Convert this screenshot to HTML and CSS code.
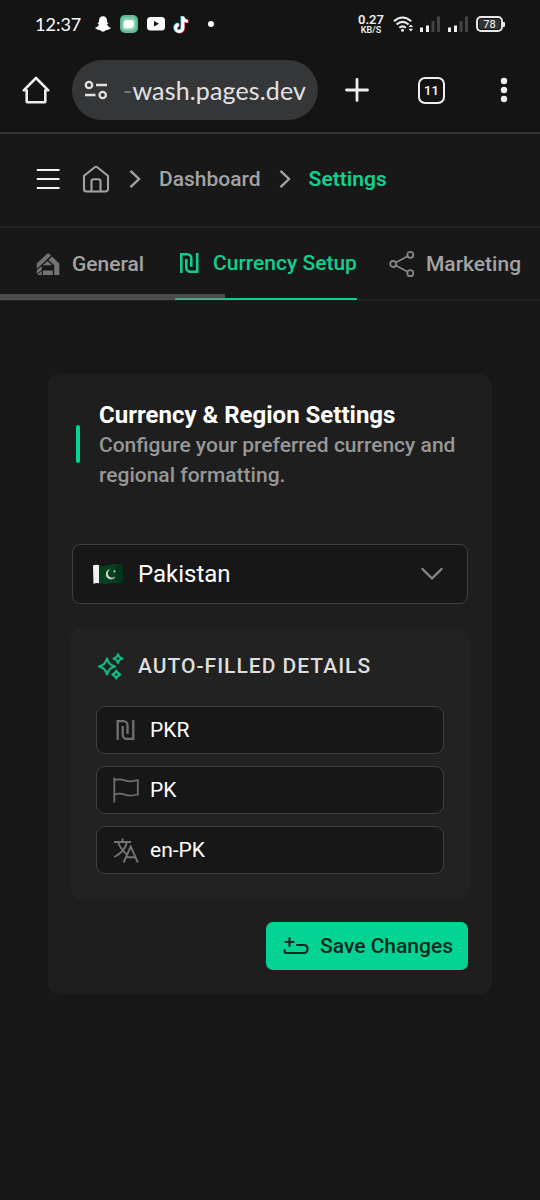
FILE: index.html
```html
<!DOCTYPE html>
<html lang="en">
<head>
<meta charset="utf-8">
<title>Settings</title>
<link rel="stylesheet" href="styles.css">
</head>
<body>
<div class="statusbar">
  <span class="clock">12:37</span>
  <svg class="st-snap" width="16" height="16" viewBox="0 0 16 16" fill="#fff"><path d="M8 .3c2.600 0 4 1.800 4 4v2.200c.7-.2 1.400 0 1.400.6 0 .7-.9.9-1.300 1.300.5 1.600 1.700 2.700 3.700 3.400.2.8-1.200 1.200-2.200 1.400l-.4 1c-1-.1-1.900-.2-2.700.3-.8.600-1.500 1.200-2.500 1.200s-1.700-.6-2.500-1.200c-.8-.5-1.700-.4-2.700-.3l-.4-1C1.400 13 0 12.600.2 11.800c2-.7 3.200-1.800 3.700-3.400-.4-.4-1.300-.6-1.300-1.300 0-.6.700-.8 1.400-.6V4.300c0-2.200 1.400-4 4-4z"/></svg>
  <svg class="st-chat" width="18" height="18" viewBox="0 0 18 18"><rect width="18" height="18" rx="5" fill="#5fbb96"/><rect x="2.200" y="2.200" width="13.600" height="13.600" rx="4" fill="#83cfb0"/><path d="M3.500 8.500Q3.500 5 7 5h3.500Q14 5 14 8v1.500q0 4-4.500 4h-6z" fill="#fff"/></svg>
  <svg class="st-yt" width="18" height="14" viewBox="0 0 18 14"><rect width="18" height="13.500" rx="3.500" fill="#fff"/><path d="M7 4l5 2.800-5 2.800z" fill="#141414"/></svg>
  <svg class="st-tt" width="17" height="19" viewBox="0 0 17 19" fill="none" stroke-width="3"><g stroke="#25dbe0"><path d="M9 1v11.500a3.600 3.600 0 1 1-4-3.600M9 1.500c.4 2.500 2.300 4 5 4.300"/></g><g stroke="#f0385f" transform="translate(1.500 1)"><path d="M9 1v11.500a3.600 3.600 0 1 1-4-3.600M9 1.500c.4 2.500 2.300 4 5 4.300"/></g><g stroke="#fff" transform="translate(.8 .5)"><path d="M9 1v11.500a3.600 3.600 0 1 1-4-3.600M9 1.500c.4 2.500 2.300 4 5 4.300"/></g></svg>
  <span class="st-dot"></span>
  <span class="speed"><b>0.27</b><small>KB/S</small></span>
  <svg class="st-wifi" width="21" height="17" viewBox="0 0 21 17" fill="none" stroke="#eee" stroke-width="2.100"><path d="M1 5.300Q9.500-2.300 18.200 5.300M3.600 8.500Q9.500 3.300 15.600 8.500M6.300 11.700q3.300-2.800 6.500 0"/><circle cx="9.500" cy="14.300" r="1.500" fill="#eee" stroke="none"/><path d="M15.500 11l2.300-2.600 2.300 2.600zM15.500 12.800l2.300 2.600 2.300-2.600z" fill="#eee" stroke="none"/></svg>
  <svg class="st-sig" width="20" height="16" viewBox="0 0 20 16"><path fill="#eee" d="M0 11.500h3V16H0zM6 9.500h3V16H6z"/><path fill="#434343" d="M11.500 5h3v11h-3zM17 .5h3V16h-3z"/></svg>
  <svg class="st-sig second" width="20" height="16" viewBox="0 0 20 16"><path fill="#eee" d="M0 11.500h3V16H0zM6 9.500h3V16H6z"/><path fill="#434343" d="M11.500 5h3v11h-3zM17 .5h3V16h-3z"/></svg>
  <span class="battery">78</span>
</div>

<div class="browserbar">
  <svg class="bb-home" width="28" height="28" viewBox="0 0 28 28" fill="none" stroke="#eee" stroke-width="2.600" stroke-linejoin="round" stroke-linecap="round"><path d="M1.700 14.300L14 2l12.300 12.300H23.300v10.700a1.300 1.300 0 0 1-1.300 1.300H6a1.300 1.300 0 0 1-1.300-1.300V14.300z"/></svg>
  <div class="urlbox">
    <svg width="24" height="20" viewBox="0 0 24 20" fill="none" stroke="#e2e2e3" stroke-width="2.300"><circle cx="5" cy="5" r="3.200"/><path d="M12 5h11M1 15h10.500"/><circle cx="18.700" cy="15" r="3.200"/></svg>
    <span class="url"><i>-</i>wash.pages.dev</span>
  </div>
  <svg class="bb-plus" width="24" height="24" viewBox="0 0 24 24" stroke="#eee" stroke-width="2.800" stroke-linecap="round"><path d="M1.500 12h21M12 1.500v21"/></svg>
  <span class="tabcount">11</span>
  <svg class="bb-more" width="8" height="26" viewBox="0 0 8 26" fill="#eee"><circle cx="4" cy="4" r="3.200"/><circle cx="4" cy="13" r="3.200"/><circle cx="4" cy="22" r="3.200"/></svg>
</div>

<header class="crumbs">
  <svg class="menu" width="24" height="22" viewBox="0 0 24 22" stroke="#f2f2f2" stroke-width="2.200"><path d="M.8 2h22.700M.8 11h22.700M.8 20h22.700"/></svg>
  <svg class="home" width="28" height="28" viewBox="0 0 28 28" fill="none" stroke="#a3a3a3" stroke-width="2.100" stroke-linejoin="round"><path d="M2 11.800a2 2 0 0 1 .8-1.600L12.700 2.300a2 2 0 0 1 2.600 0l9.900 7.900a2 2 0 0 1 .8 1.600V24a2.500 2.500 0 0 1-2.500 2.500h-19A2.500 2.500 0 0 1 2 24zM9.500 26.500V16.300a2 2 0 0 1 2-2h5a2 2 0 0 1 2 2v10.200"/></svg>
  <svg class="sep" width="12" height="20" viewBox="0 0 12 20" fill="none" stroke="#a3a3a3" stroke-width="2.400"><path d="M1.500 1.800L10 10l-8.500 8.200"/></svg>
  <span class="crumb">Dashboard</span>
  <svg class="sep two" width="12" height="20" viewBox="0 0 12 20" fill="none" stroke="#a3a3a3" stroke-width="2.400"><path d="M1.500 1.800L10 10l-8.500 8.200"/></svg>
  <span class="crumb current">Settings</span>
</header>

<nav class="tabs">
  <a class="tab general"><svg width="24" height="24" viewBox="0 0 24 24" fill="#737373"><path d="M.8 11.500L12 1l3 2.500L.8 17zM16 4.500L23.300 11.500V23H18.200V13.300L12.500 8zM.8 18.300l5-4.300v3.800L.8 22zM1.200 23l4.600-4.200V23zM7 18.600h9.800V23H7zM7 13l4.500-4 4.500 4.300H7z"/></svg><span>General</span></a>
  <a class="tab active"><svg width="20" height="22" viewBox="0 0 20 22" fill="none" stroke="currentColor" stroke-width="2.600"><path d="M2.300 21V2.300h6a4 4 0 0 1 4 4v8.500M7.300 7v8.700a4 4 0 0 0 4 4h6.900V1"/></svg><span>Currency Setup</span></a>
  <a class="tab marketing"><svg width="26" height="28" viewBox="0 0 26 28" fill="none" stroke="#858585" stroke-width="1.800"><circle cx="4.200" cy="14" r="3"/><circle cx="21.300" cy="4.800" r="3"/><circle cx="21.300" cy="23.200" r="3"/><path d="M6.900 12.500l11.600-6.300M6.900 15.500l11.600 6.300"/></svg><span>Marketing</span></a>
  <i class="scroll"></i>
</nav>

<main class="card">
  <div class="heading">
    <i class="accent"></i>
    <div><h1>Currency &amp; Region Settings</h1><p>Configure your preferred currency and<br>regional formatting.</p></div>
  </div>
  <div class="select">
    <svg class="flag" width="30" height="23" viewBox="0 0 30 23"><path d="M0 2.500Q3 1.200 6.500 2.300v18Q3 19.300.5 21z" fill="#f2f2f2"/><path d="M6 2.200c7 2.800 11-1.800 18-1.200 3 .2 4.500.8 6 .6v18.200c-5 1.200-7-.6-12 .4-5 1-8 1.200-12 .1z" fill="#07401f"/><path d="M23 1c3 .2 4.500.8 7 .6v18.200c-3 .6-5 .2-7-.1z" fill="#04321a"/><path d="M17.500 6.300a5 5 0 1 0 5 7 4.400 4.400 0 1 1-5-7z" fill="#cfd8d2"/><path d="M21.500 6.800l.4 1 1 .1-.8.800.3 1-.9-.6-.9.600.2-1-.7-.8 1-.1z" fill="#cfd8d2"/></svg>
    <span>Pakistan</span>
    <svg class="chev" width="22" height="14" viewBox="0 0 22 14" fill="none" stroke="#858585" stroke-width="2.400" stroke-linecap="round" stroke-linejoin="round"><path d="M1.500 2L11 11.500 20.500 2"/></svg>
  </div>
  <section class="details">
    <h2><svg width="28" height="28" viewBox="0 0 28 28" fill="none" stroke="#0fb981" stroke-width="2.200" stroke-linejoin="round"><path d="M11 6.500c1.500 5 3 6.500 8 8-5 1.500-6.500 3-8 8-1.500-5-3-6.500-8-8 5-1.500 6.500-3 8-8zM22 2.200c.9 2.900 1.500 3.500 4.400 4.400-2.900.9-3.500 1.500-4.400 4.400-.9-2.900-1.500-3.500-4.400-4.400 2.900-.9 3.500-1.500 4.400-4.400zM20.300 18.700c.8 2.500 1.400 3.100 3.900 3.900-2.500.8-3.100 1.400-3.900 3.900-.8-2.500-1.400-3.100-3.900-3.900 2.500-.8 3.100-1.400 3.900-3.900z"/></svg><span>AUTO-FILLED DETAILS</span></h2>
    <div class="field"><svg width="28" height="28" viewBox="0 0 28 28" fill="none" stroke="#707070" stroke-width="2.300"><path d="M6.700 24V5.200h5.800a4 4 0 0 1 4 4v8.800M11.700 10v8.800a4 4 0 0 0 4 4h6.600V4"/></svg><span>PKR</span></div>
    <div class="field"><svg width="28" height="28" viewBox="0 0 28 28" fill="none" stroke="#6e6e6e" stroke-width="1.800"><path d="M3.300 1.500v25M3.300 4.200c3.500-1.300 6.500-1.300 10.500.2 4.500 1.700 7.500 1.300 13-.2v14.300c-5.500 1.600-8.500 1.700-13 .1-4-1.400-7-1.300-10.500 0"/></svg><span>PK</span></div>
    <div class="field"><svg width="28" height="28" viewBox="0 0 28 28" fill="none" stroke="#737373" stroke-width="1.900"><path d="M3 6h17M11.500 2.500V6M16 6C14.500 12.500 9.500 18 3.300 21M7 6c1.800 5 4.700 9 8.500 12M12.500 26.500l7.300-16 7 16M15 21.300h9.500"/></svg><span>en-PK</span></div>
  </section>
  <button class="save"><svg width="26" height="20" viewBox="0 0 26 20" fill="none" stroke="#08291d" stroke-width="2.200" stroke-linecap="round"><path d="M6.500 2v8M2.500 6h8M14 9h7a3.500 3.500 0 0 1 3.500 3.500v1A3.500 3.500 0 0 1 21 17H3.500a2 2 0 0 1-2-2v-1"/></svg><span>Save Changes</span></button>
</main>
</body>
</html>
```
FILE: styles.css
```css
* { box-sizing: border-box; }
body { margin: 0; min-height: 1200px; background: #181818; font-family: Roboto, sans-serif; color: #fff; overflow: hidden; }
svg { display: block; flex: none; }
span { white-space: nowrap; }

.statusbar { height: 48px; display: flex; align-items: center; background: #141414; padding-left: 35px; }
.clock { width: 60px; font: 400 18px/24px Lato, sans-serif; }
.st-chat { margin-left: 9px; }
.st-yt { margin-left: 9px; }
.st-tt { margin-left: 8px; }
.st-dot { width: 6px; height: 6px; border-radius: 50%; background: #fff; margin-left: 18px; }
.speed { width: 26px; margin-left: 144px; padding-top: 1px; display: flex; flex-direction: column; align-items: center; font-family: Roboto, sans-serif; color: #eee; }
.speed b { font-size: 13px; line-height: 12px; font-weight: 600; }
.speed small { font-size: 9px; line-height: 9px; font-weight: 600; }
.st-wifi { margin-left: 9px; }
.st-sig { margin-left: 6px; }
.st-sig.second { margin-left: 8px; }
.battery { width: 27px; height: 16px; margin-left: 8px; border: 2px solid #e8e8e8; border-radius: 5px; font: 11px/13px Roboto, sans-serif; text-align: center; background: #333; box-shadow: inset 0 0 0 1px #141414; position: relative; }
.battery::after { content: ""; position: absolute; right: -4px; top: 4px; width: 2px; height: 5px; background: #e8e8e8; border-radius: 0 1px 1px 0; }

.browserbar { height: 86px; display: flex; align-items: center; background: #141414; border-bottom: 2px solid #353535; padding: 0 0 0 22px; }
.urlbox { width: 246px; height: 60px; margin-left: 22px; border-radius: 30px; background: #353638; display: flex; align-items: center; padding-left: 12px; }
.url { margin-left: 15px; font: 25px/32px Lato, sans-serif; letter-spacing: .15px; color: #e2e2e3; }
.url i { font-style: normal; color: #77787a; }
.bb-plus { margin-left: 27px; }
.tabcount { width: 27px; height: 27px; margin-left: 49px; border: 2.500px solid #eee; border-radius: 7px; font: 500 13px/23px Roboto, sans-serif; text-align: center; }
.bb-more { margin-left: 55px; }

.crumbs { height: 94px; display: flex; align-items: center; padding: 0 0 2px 36px; border-bottom: 2px solid #222; }
.home { margin-left: 22px; }
.sep { margin-left: 19px; }
.crumb { margin-left: 18px; font-size: 21px; font-weight: 500; line-height: 30px; color: #a3a3a3; }
.sep.two { margin-left: 18px; }
.crumb.current { color: #10cf8e; font-weight: 600; }

.tabs { height: 73px; display: flex; position: relative; padding-left: 36px; border-bottom: 2px solid #222; }
.tab { height: 72px; display: flex; align-items: center; gap: 12px; font-size: 21px; font-weight: 500; color: #a3a3a3; }
.tab:not(.active) span { padding-bottom: 1px; }
.general { width: 108px; }
.active { width: 182px; margin-left: 31px; padding-left: 4px; gap: 14px; color: #10cf8e; border-bottom: 2px solid #10cf8e; }
.marketing { margin-left: 32px; gap: 11px; }
.scroll { position: absolute; left: 0; top: 66px; width: 225px; height: 6px; background: rgba(128,128,128,.5); }

.card { width: 444px; height: 620px; margin: 73px 48px 0; padding: 26px 24px 24px; border-radius: 12px; background: #1e1e1e; }
.heading { display: flex; align-items: center; height: 90px; padding-left: 4px; }
.accent { width: 4px; height: 38px; margin: -2px 19px 0 0; border-radius: 2px; background: #06d494; }
h1, p, h2 { margin: 0; }
h1 { font-size: 24px; line-height: 30px; font-weight: 700; white-space: nowrap; }
p { font-size: 21px; line-height: 30px; font-weight: 500; color: #979797; white-space: nowrap; }
.select { height: 60px; margin-top: 54.400px; border: 1.500px solid #404040; border-radius: 8px; background: #171717; display: flex; align-items: center; padding: 0 24px 0 20px; font-size: 24px; }
.select span { margin-left: 15px; }
.chev { margin-left: auto; }
.details { height: 272.500px; margin: 23px -2px 0; border-radius: 13px; background: #222; padding: 17px 26px 0; }
h2 { height: 44px; display: flex; align-items: center; font-size: 21px; font-weight: 500; color: #dedede; letter-spacing: 1px; }
h2 span { margin-left: 14px; }
.field { height: 48px; margin-top: 12px; display: flex; align-items: center; border: 1.500px solid #404040; border-radius: 9px; background: #171717; padding-left: 14px; font-size: 21px; }
h2 + .field { margin-top: 18px; }
.field span { margin-left: 11px; }
.save { display: flex; align-items: center; width: 202px; height: 48px; margin: 22.500px 0 0 auto; padding: 0 0 0 17px; border: 0; border-radius: 7px; background: #04d493; color: #08291d; font: 500 21px/30px Roboto, sans-serif; }
.save span { margin-left: 11px; }
```
